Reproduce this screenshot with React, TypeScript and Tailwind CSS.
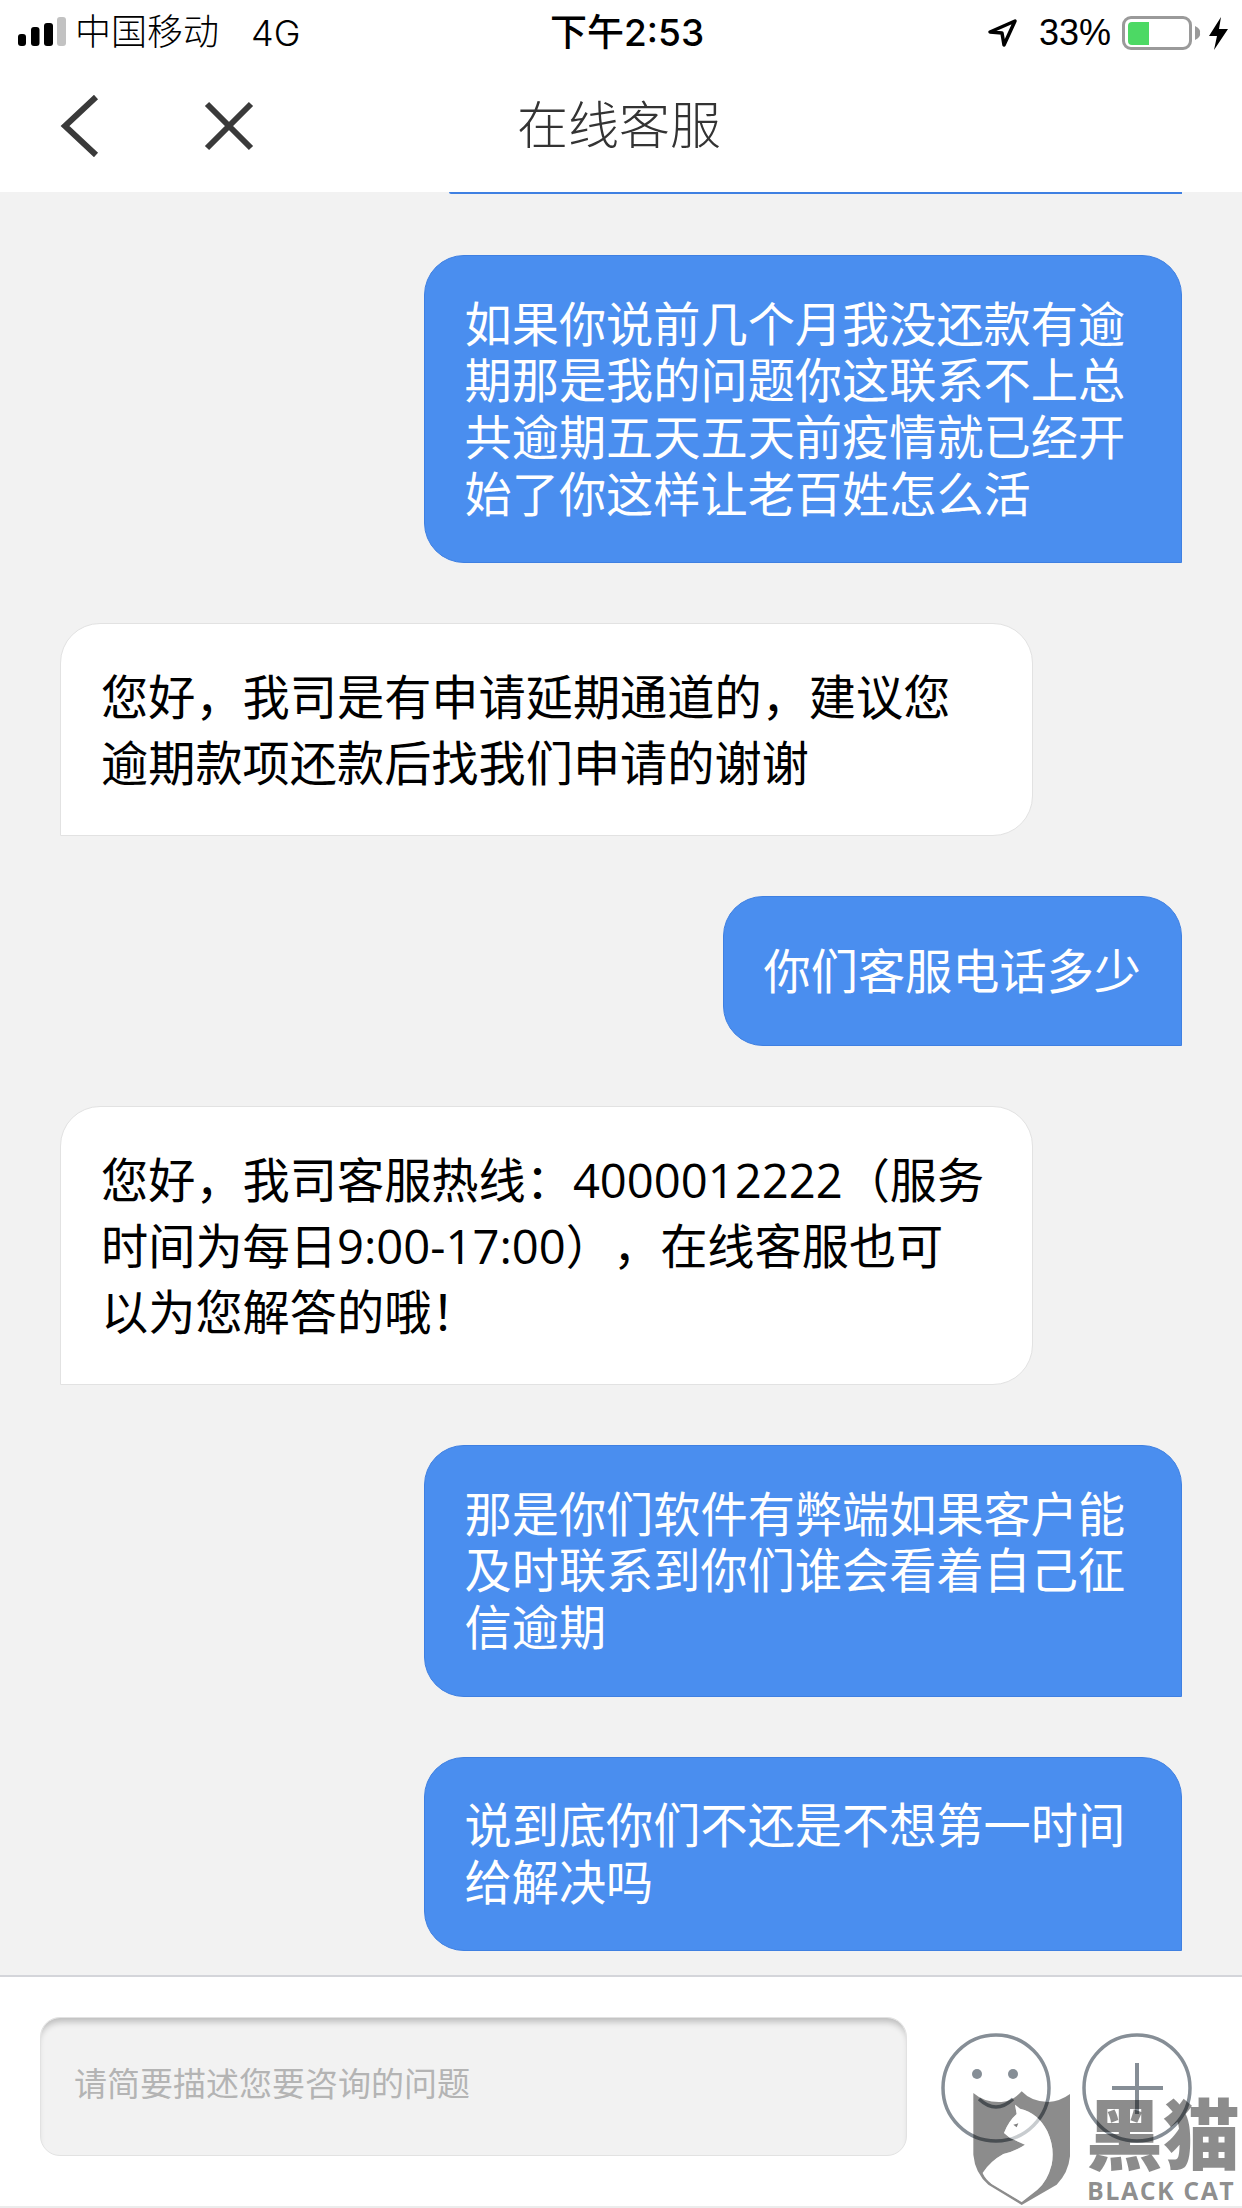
import React from "react";

const CJK = "font-['Open_Sans','Noto_Sans_CJK_SC',sans-serif] [text-spacing-trim:space-all]";
const STATUS = "font-['Liberation_Sans','Noto_Sans_CJK_SC',sans-serif]";

function Me({ children }: { children: React.ReactNode }) {
  return (
    <div className="w-[758px] self-end rounded-[40px] rounded-br-none border border-[#3f80e2] bg-[#4a8eef] py-[39.5px] pl-[40px] pr-[30px] text-[47.2px] leading-[56.8px] text-white">
      {children}
    </div>
  );
}

function Them({ children }: { children: React.ReactNode }) {
  return (
    <div className="w-[973px] self-start rounded-[40px] rounded-bl-none border border-[#e2e2e2] bg-white py-[39.5px] pl-[40px] pr-[43px] text-[47.2px] leading-[66px] text-black">
      {children}
    </div>
  );
}

export default function App() {
  return (
    <div className={`${CJK} flex h-[2208px] w-[1242px] flex-col overflow-hidden bg-white`}>
      {/* status bar */}
      <div className={`${STATUS} relative flex h-[64px] items-center pt-[2px] text-[36px] leading-none text-black`}>
        <svg width="48" height="29" viewBox="0 0 48 29" className="mb-[4px] ml-[18px] shrink-0">
          <rect x="0" y="17" width="8" height="12" rx="3" fill="#000" />
          <rect x="13" y="10" width="8.5" height="19" rx="3" fill="#000" />
          <rect x="26" y="6" width="9" height="23" rx="3" fill="#000" />
          <rect x="39" y="0" width="9" height="29" rx="3" fill="#c2c2c2" />
        </svg>
        <span className="ml-[9px] font-light">中国移动</span>
        <span className="ml-[32px] font-['Inter',sans-serif] text-[36px] font-light">4G</span>
        <span className="absolute left-[550px] mb-[2px] font-['Inter','Noto_Sans_CJK_SC',sans-serif] text-[37px] font-medium">下午2:53</span>
        <div className="ml-auto flex items-center">
          <svg width="30" height="30" viewBox="0 0 30 30" fill="none" stroke="#000" strokeWidth="3.5" strokeLinejoin="round">
            <path d="M2 14 L27 3 L16 27 L14 15 Z" />
          </svg>
          <span className="ml-[21px]">33%</span>
          <div className="relative ml-[11px] h-[34px] w-[70px] rounded-[9px] border-[3.5px] border-[#9a9a9a] p-[2.5px]">
            <div className="h-full w-[21px] rounded-l-[4px] bg-[#4cd964]" />
          </div>
          <svg width="6" height="14" viewBox="0 0 6 14" className="ml-[3px]">
            <path d="M0 0 Q6 3 5 7 Q6 11 0 14 Z" fill="#9a9a9a" />
          </svg>
          <svg width="19" height="33" viewBox="0 0 19 33" className="ml-[8px] mr-[14px]">
            <path d="M12 0 L0 19 L8 19 L5 33 L19 12 L10 12 Z" fill="#000" />
          </svg>
        </div>
      </div>

      {/* nav bar */}
      <div className="flex h-[128px] items-center bg-white pl-[60px]">
        <svg width="40" height="62" viewBox="0 0 40 62" fill="none" stroke="#3a3a3a" strokeWidth="6" className="mb-[4px] shrink-0">
          <path d="M36 2 L5 31 L36 60" />
        </svg>
        <svg width="50" height="50" viewBox="0 0 50 50" fill="none" stroke="#3a3a3a" strokeWidth="6" className="mb-[4px] ml-[104px] shrink-0">
          <path d="M3 3 L47 47 M47 3 L3 47" />
        </svg>
        <div className="mb-[8px] ml-[263px] text-[51px] font-light leading-none text-[#333333]">在线客服</div>
      </div>

      {/* conversation */}
      <div className="flex flex-1 flex-col gap-[60px] overflow-hidden bg-[#f2f2f2] pl-[60px] pr-[60.5px]">
        <div className="mb-[1px] h-[2px] w-[733px] shrink-0 self-end rounded-bl-[2px] bg-[#3f80e2]" />
        <Me>如果你说前几个月我没还款有逾期那是我的问题你这联系不上总共逾期五天五天前疫情就已经开始了你这样让老百姓怎么活</Me>
        <Them>您好，我司是有申请延期通道的，建议您逾期款项还款后找我们申请的谢谢</Them>
        <div className="w-[459px] self-end rounded-[40px] rounded-br-none border border-[#3f80e2] bg-[#4a8eef] py-[39px] pl-[40px] pr-[30px] text-[47.2px] leading-[70px] text-white">
          你们客服电话多少
        </div>
        <Them>您好，我司客服热线：4000012222（服务时间为每日9:00-17:00），在线客服也可以为您解答的哦！</Them>
        <Me>那是你们软件有弊端如果客户能及时联系到你们谁会看着自己征信逾期</Me>
        <Me>说到底你们不还是不想第一时间给解决吗</Me>
      </div>

      {/* composer */}
      <div className="relative flex h-[233px] shrink-0 items-start border-y-2 border-t-[#d4d5da] border-b-[#ececec] bg-white pl-[40px] pt-[40px]">
        <div className="flex h-[139px] w-[867px] items-center rounded-[20px] border border-[#e2e2e2] bg-[#f2f2f2] pb-[6px] pl-[33px] text-[33px] text-[#b4b4b4] shadow-[inset_0_7px_6px_-3px_rgba(0,0,0,0.22)]">
          请简要描述您要咨询的问题
        </div>
        <svg width="110" height="110" viewBox="0 0 110 110" fill="none" stroke="#868e96" strokeWidth="3.5" className="ml-[34px] mt-[16px] shrink-0">
          <circle cx="55" cy="55" r="53" />
          <circle cx="36" cy="41" r="5" fill="#868e96" stroke="none" />
          <circle cx="72" cy="41" r="5" fill="#868e96" stroke="none" />
          <path d="M38 66 Q55 82 72 66" />
        </svg>
        <svg width="110" height="110" viewBox="0 0 110 110" fill="none" stroke="#868e96" strokeWidth="3.5" className="ml-[31px] mt-[16px] shrink-0">
          <circle cx="55" cy="55" r="53" />
          <path d="M30 55 H81 M55 30 V81" strokeWidth="4" />
        </svg>

        {/* watermark */}
        <div className="absolute bottom-0 right-0 h-[128px] w-[282px]">
          <svg width="282" height="128" viewBox="0 0 846 384" className="absolute left-0 top-0">
            <path
              fillRule="evenodd"
              fill="#000"
              fillOpacity="0.45"
              d="M40 45 Q75 75 125 72 Q160 68 185 40 Q215 72 265 72 Q300 70 330 48 L330 235 Q325 285 290 320 L185 381 L85 320 Q45 285 40 230 Z M165 80 L180 92 Q235 105 262 160 Q285 210 275 260 Q262 310 232 335 L185 372 L95 318 Q75 302 68 285 Q90 250 130 228 Q165 220 195 200 L150 180 L132 165 Q145 130 170 108 Z"
            />
            <path
              fill="#fff"
              fillOpacity="0.55"
              d="M165 80 L180 92 Q235 105 262 160 Q285 210 275 260 Q262 310 232 335 L185 372 L95 318 Q75 302 68 285 Q90 250 130 228 Q165 220 195 200 L150 180 L132 165 Q145 130 170 108 Z"
            />
            <path d="M160 140 L175 136 L170 148 Z" fill="#000" fillOpacity="0.5" />
          </svg>
          <div className="absolute left-[126px] top-[14px] whitespace-nowrap font-['Noto_Sans_CJK_SC',sans-serif] text-[77px] font-black leading-[77px] text-black/45">
            黑猫
          </div>
          <div className="absolute left-[127px] top-[100px] whitespace-nowrap font-['Open_Sans',sans-serif] text-[25px] font-bold leading-[25px] tracking-[1.5px] text-black/45">
            BLACK CAT
          </div>
        </div>
      </div>
    </div>
  );
}
